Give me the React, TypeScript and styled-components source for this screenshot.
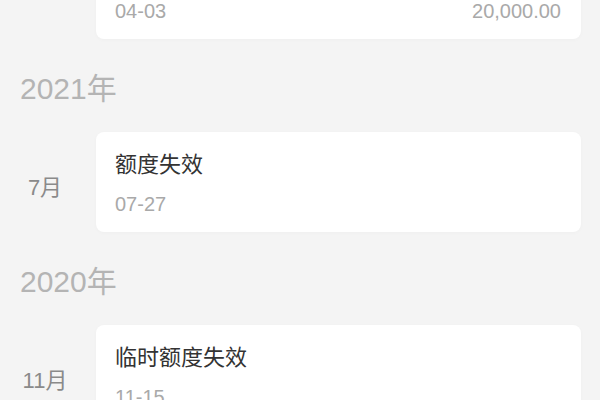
import React from "react";
import styled, { createGlobalStyle } from "styled-components";

const GlobalStyle = createGlobalStyle`
  html, body {
    margin: 0;
    padding: 0;
    background: #f4f4f4;
    overflow: hidden;
  }
  body {
    font-family: "Liberation Sans", "Noto Sans CJK SC", sans-serif;
  }
`;

const Page = styled.div`
  width: 600px;
  height: 400px;
  overflow: hidden;
  background: #f4f4f4;
`;

const Timeline = styled.div`
  display: flex;
  flex-direction: column;
  margin-top: -173px;
  padding-right: 19px;
`;

const YearTitle = styled.div`
  padding: 31px 0 25px 20px;
  font-size: 30px;
  line-height: 37px;
  color: #b4b4b4;
`;

const MonthGroup = styled.div`
  display: grid;
  grid-template-columns: 90px 1fr;
  column-gap: 6px;
  align-items: center;
`;

const MonthLabel = styled.div`
  padding-top: 12px;
  text-align: center;
  font-size: 22px;
  line-height: 26px;
  color: #8a8a8a;
`;

const CardList = styled.div`
  display: flex;
  flex-direction: column;
  gap: 12px;
`;

const Card = styled.div`
  box-sizing: border-box;
  height: 100px;
  padding: 20px 20px 16px 19px;
  background: #ffffff;
  border-radius: 8px;
  box-shadow: 0 1px 4px rgba(0, 0, 0, 0.025);
  display: flex;
  flex-direction: column;
  gap: 14px;
`;

const CardTitle = styled.div`
  font-size: 22px;
  line-height: 26px;
  color: #333333;
`;

const CardFoot = styled.div`
  display: flex;
  justify-content: space-between;
  font-size: 20px;
  line-height: 24px;
  color: #a9a9a9;
`;

type Record = { title: string; date: string; amount?: string };
type Month = { label: string; records: Record[] };
type Year = { year?: string; months: Month[] };

const data: Year[] = [
  {
    months: [
      {
        label: "4月",
        records: [
          { title: "额度调整", date: "04-20", amount: "30,000.00" },
          { title: "额度调整", date: "04-03", amount: "20,000.00" },
        ],
      },
    ],
  },
  {
    year: "2021年",
    months: [{ label: "7月", records: [{ title: "额度失效", date: "07-27" }] }],
  },
  {
    year: "2020年",
    months: [
      { label: "11月", records: [{ title: "临时额度失效", date: "11-15" }] },
    ],
  },
];

export default function App() {
  return (
    <Page>
      <GlobalStyle />
      <Timeline>
        {data.map((y, i) => (
          <React.Fragment key={i}>
            {y.year && <YearTitle>{y.year}</YearTitle>}
            {y.months.map((m) => (
              <MonthGroup key={m.label}>
                <MonthLabel>{m.label}</MonthLabel>
                <CardList>
                  {m.records.map((r, j) => (
                    <Card key={j}>
                      <CardTitle>{r.title}</CardTitle>
                      <CardFoot>
                        <span>{r.date}</span>
                        {r.amount && <span>{r.amount}</span>}
                      </CardFoot>
                    </Card>
                  ))}
                </CardList>
              </MonthGroup>
            ))}
          </React.Fragment>
        ))}
      </Timeline>
    </Page>
  );
}
